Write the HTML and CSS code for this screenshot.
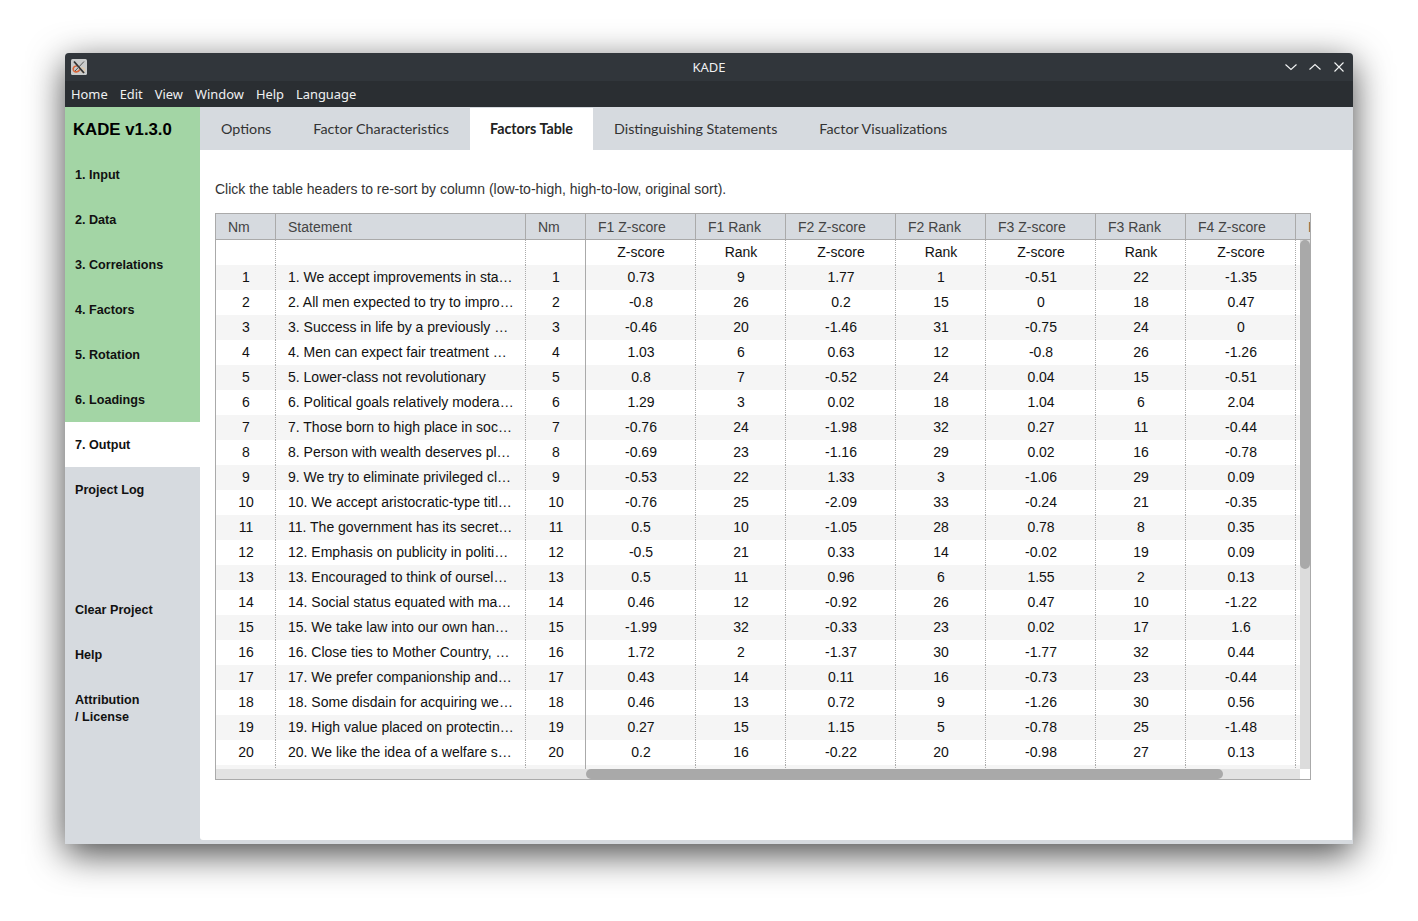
FILE: index.html
```html
<!DOCTYPE html>
<html>
<head>
    <title>KADE</title>
    <link rel="stylesheet" href="styles.css">
</head>
<body>
<div class="window">
    <div class="titlebar">
        <svg class="app-icon" width="16" height="16" viewBox="0 0 16 16">
            <rect x="0" y="0" width="16" height="16" rx="1.5" fill="#c9cbcb"/>
            <path d="M6 7 C3 6.5 1.5 9.5 2.5 11.5 C3.5 13.5 7 13.5 9 10.5" stroke="#d9663a" stroke-width="1.6" fill="none"/>
            <path d="M10 9 C12.5 8.5 14 10 13.5 11.5 C13 13 11.5 13.5 10.5 13" stroke="#e3c9a8" stroke-width="1.2" fill="none"/>
            <path d="M3 2.5 L13 14" stroke="#333" stroke-width="1.8" fill="none"/>
            <path d="M13 2.5 L4 12" stroke="#555" stroke-width="1" fill="none"/>
        </svg>
        <span class="title-text">KADE</span>
        <div class="win-buttons">
            <svg width="12" height="12" viewBox="0 0 12 12"><path d="M0.5 3.5 L6 8.5 L11.5 3.5" stroke="#f2f4f4" stroke-width="1.1" fill="none"/></svg>
            <svg width="12" height="12" viewBox="0 0 12 12"><path d="M0.5 8.5 L6 3.5 L11.5 8.5" stroke="#f2f4f4" stroke-width="1.1" fill="none"/></svg>
            <svg width="12" height="12" viewBox="0 0 12 12"><path d="M1.5 1.5 L10.5 10.5 M10.5 1.5 L1.5 10.5" stroke="#f2f4f4" stroke-width="1.1" fill="none"/></svg>
        </div>
    </div>
    <div class="menubar">
        <span>Home</span><span>Edit</span><span>View</span><span>Window</span><span>Help</span><span>Language</span>
    </div>
    <div class="main">
        <div class="sidebar">
            <div class="brand">KADE v1.3.0</div>
            <div class="nav-item green">1. Input</div>
            <div class="nav-item green">2. Data</div>
            <div class="nav-item green">3. Correlations</div>
            <div class="nav-item green">4. Factors</div>
            <div class="nav-item green">5. Rotation</div>
            <div class="nav-item green">6. Loadings</div>
            <div class="nav-item active">7. Output</div>
            <div class="nav-item">Project Log</div>
            <div class="nav-spacer"></div>
            <div class="nav-item">Clear Project</div>
            <div class="nav-item">Help</div>
            <div class="nav-item">Attribution<br>/ License</div>
        </div>
        <div class="content">
            <div class="tabs">
                <div class="tab">Options</div>
                <div class="tab">Factor Characteristics</div>
                <div class="tab selected">Factors Table</div>
                <div class="tab">Distinguishing Statements</div>
                <div class="tab">Factor Visualizations</div>
            </div>
            <div class="panel">
                <p class="hint">Click the table headers to re-sort by column (low-to-high, high-to-low, original sort).</p>
                <div class="grid">
                    <table>
                        <colgroup>
                            <col class="w60"><col class="w250"><col class="w60">
                            <col class="w110"><col class="w90"><col class="w110"><col class="w90">
                            <col class="w110"><col class="w90"><col class="w110"><col class="w90">
                        </colgroup>
                        <thead>
                            <tr><th>Nm</th><th>Statement</th><th class="frozen">Nm</th><th>F1 Z-score</th><th>F1 Rank</th><th>F2 Z-score</th><th>F2 Rank</th><th>F3 Z-score</th><th>F3 Rank</th><th>F4 Z-score</th><th>F4 Rank</th></tr>
                        </thead>
                        <tbody>
                            <tr><td></td><td></td><td class="frozen"></td><td>Z-score</td><td>Rank</td><td>Z-score</td><td>Rank</td><td>Z-score</td><td>Rank</td><td>Z-score</td><td></td></tr>
                            <tr><td>1</td><td class="stmt">1. We accept improvements in sta…</td><td class="frozen">1</td><td>0.73</td><td>9</td><td>1.77</td><td>1</td><td>-0.51</td><td>22</td><td>-1.35</td><td></td></tr>
                            <tr><td>2</td><td class="stmt">2. All men expected to try to impro…</td><td class="frozen">2</td><td>-0.8</td><td>26</td><td>0.2</td><td>15</td><td>0</td><td>18</td><td>0.47</td><td></td></tr>
                            <tr><td>3</td><td class="stmt">3. Success in life by a previously …</td><td class="frozen">3</td><td>-0.46</td><td>20</td><td>-1.46</td><td>31</td><td>-0.75</td><td>24</td><td>0</td><td></td></tr>
                            <tr><td>4</td><td class="stmt">4. Men can expect fair treatment …</td><td class="frozen">4</td><td>1.03</td><td>6</td><td>0.63</td><td>12</td><td>-0.8</td><td>26</td><td>-1.26</td><td></td></tr>
                            <tr><td>5</td><td class="stmt">5. Lower-class not revolutionary</td><td class="frozen">5</td><td>0.8</td><td>7</td><td>-0.52</td><td>24</td><td>0.04</td><td>15</td><td>-0.51</td><td></td></tr>
                            <tr><td>6</td><td class="stmt">6. Political goals relatively modera…</td><td class="frozen">6</td><td>1.29</td><td>3</td><td>0.02</td><td>18</td><td>1.04</td><td>6</td><td>2.04</td><td></td></tr>
                            <tr><td>7</td><td class="stmt">7. Those born to high place in soc…</td><td class="frozen">7</td><td>-0.76</td><td>24</td><td>-1.98</td><td>32</td><td>0.27</td><td>11</td><td>-0.44</td><td></td></tr>
                            <tr><td>8</td><td class="stmt">8. Person with wealth deserves pl…</td><td class="frozen">8</td><td>-0.69</td><td>23</td><td>-1.16</td><td>29</td><td>0.02</td><td>16</td><td>-0.78</td><td></td></tr>
                            <tr><td>9</td><td class="stmt">9. We try to eliminate privileged cl…</td><td class="frozen">9</td><td>-0.53</td><td>22</td><td>1.33</td><td>3</td><td>-1.06</td><td>29</td><td>0.09</td><td></td></tr>
                            <tr><td>10</td><td class="stmt">10. We accept aristocratic-type titl…</td><td class="frozen">10</td><td>-0.76</td><td>25</td><td>-2.09</td><td>33</td><td>-0.24</td><td>21</td><td>-0.35</td><td></td></tr>
                            <tr><td>11</td><td class="stmt">11. The government has its secret…</td><td class="frozen">11</td><td>0.5</td><td>10</td><td>-1.05</td><td>28</td><td>0.78</td><td>8</td><td>0.35</td><td></td></tr>
                            <tr><td>12</td><td class="stmt">12. Emphasis on publicity in politi…</td><td class="frozen">12</td><td>-0.5</td><td>21</td><td>0.33</td><td>14</td><td>-0.02</td><td>19</td><td>0.09</td><td></td></tr>
                            <tr><td>13</td><td class="stmt">13. Encouraged to think of oursel…</td><td class="frozen">13</td><td>0.5</td><td>11</td><td>0.96</td><td>6</td><td>1.55</td><td>2</td><td>0.13</td><td></td></tr>
                            <tr><td>14</td><td class="stmt">14. Social status equated with ma…</td><td class="frozen">14</td><td>0.46</td><td>12</td><td>-0.92</td><td>26</td><td>0.47</td><td>10</td><td>-1.22</td><td></td></tr>
                            <tr><td>15</td><td class="stmt">15. We take law into our own han…</td><td class="frozen">15</td><td>-1.99</td><td>32</td><td>-0.33</td><td>23</td><td>0.02</td><td>17</td><td>1.6</td><td></td></tr>
                            <tr><td>16</td><td class="stmt">16. Close ties to Mother Country, …</td><td class="frozen">16</td><td>1.72</td><td>2</td><td>-1.37</td><td>30</td><td>-1.77</td><td>32</td><td>0.44</td><td></td></tr>
                            <tr><td>17</td><td class="stmt">17. We prefer companionship and…</td><td class="frozen">17</td><td>0.43</td><td>14</td><td>0.11</td><td>16</td><td>-0.73</td><td>23</td><td>-0.44</td><td></td></tr>
                            <tr><td>18</td><td class="stmt">18. Some disdain for acquiring we…</td><td class="frozen">18</td><td>0.46</td><td>13</td><td>0.72</td><td>9</td><td>-1.26</td><td>30</td><td>0.56</td><td></td></tr>
                            <tr><td>19</td><td class="stmt">19. High value placed on protectin…</td><td class="frozen">19</td><td>0.27</td><td>15</td><td>1.15</td><td>5</td><td>-0.78</td><td>25</td><td>-1.48</td><td></td></tr>
                            <tr><td>20</td><td class="stmt">20. We like the idea of a welfare s…</td><td class="frozen">20</td><td>0.2</td><td>16</td><td>-0.22</td><td>20</td><td>-0.98</td><td>27</td><td>0.13</td><td></td></tr>
                            <tr><td></td><td></td><td class="frozen"></td><td></td><td></td><td></td><td></td><td></td><td></td><td></td><td></td></tr>
                        </tbody>
                    </table>
                    <div class="vscroll"><div class="vthumb"></div></div>
                    <div class="hscroll"><div class="hthumb"></div></div>
                    <div class="corner"></div>
                </div>
            </div>
        </div>
    </div>
</div>
</body>
</html>
```

FILE: styles.css
```css
html, body {
    margin: 0;
    background-color: white;
}
body {
    padding: 53px 65px 0;
    height: 921px;
    box-sizing: border-box;
    overflow: hidden;
}
.window {
    width: 1288px;
    height: 791px;
    display: flex;
    flex-direction: column;
    border-radius: 4px 4px 0 0;
    overflow: hidden;
    box-shadow: 0 10px 36px rgba(0, 0, 0, 0.72);
    background-color: #d6dadf;
}
.titlebar {
    position: relative;
    height: 28px;
    flex: none;
    display: flex;
    align-items: center;
    justify-content: center;
    background-color: #31363b;
}
.app-icon {
    position: absolute;
    left: 6px;
    top: 6px;
}
.title-text {
    font-family: "Noto Sans", sans-serif;
    font-size: 13px;
    color: #eff0f1;
}
.win-buttons {
    position: absolute;
    right: 8px;
    top: 8px;
    display: flex;
    gap: 12px;
}
.win-buttons svg {
    display: block;
}
.menubar {
    height: 26px;
    flex: none;
    display: flex;
    align-items: center;
    gap: 12px;
    padding-left: 6px;
    background-color: #2a2e32;
    color: #eff0f1;
    font-family: "Noto Sans", sans-serif;
    font-size: 12.9px;
}
.main {
    flex: 1;
    display: flex;
    min-height: 0;
}
.sidebar {
    width: 135px;
    flex: none;
    font-family: "Liberation Sans", Arial, sans-serif;
    font-weight: bold;
    color: #111;
}
.brand {
    height: 45px;
    box-sizing: border-box;
    padding: 13px 0 0 8px;
    font-size: 16.8px;
    color: #000;
    background-color: #a3d5a5;
}
.nav-item {
    height: 45px;
    box-sizing: border-box;
    padding: 15px 0 0 10px;
    font-size: 12.6px;
    line-height: 17px;
}
.nav-item.green {
    background-color: #a3d5a5;
}
.nav-item.active {
    background-color: white;
}
.nav-spacer {
    height: 75px;
}
.content {
    flex: 1;
    display: flex;
    flex-direction: column;
    padding-right: 1px;
    padding-bottom: 4px;
    min-width: 0;
}
.tabs {
    height: 43px;
    flex: none;
    display: flex;
    font-family: Lato, sans-serif;
    font-size: 14.3px;
    color: #333;
}
.tab {
    padding: 13px 21px 0;
    box-sizing: border-box;
}
.selected {
    margin-top: 1px;
    padding-top: 12px;
    padding-left: 20px;
    padding-right: 20px;
    font-weight: bold;
    color: #222;
    background-color: white;
}
.panel {
    flex: 1;
    background-color: white;
    padding: 31px 0 0 15px;
    border-bottom-left-radius: 3px;
    font-family: "Liberation Sans", Arial, sans-serif;
}
.hint {
    margin: 0 0 16px;
    font-size: 14px;
    line-height: 16px;
    color: #333;
}
.grid {
    position: relative;
    width: 1094px;
    height: 565px;
    border: 1px solid #aaa;
    overflow: hidden;
}
table {
    table-layout: fixed;
    width: 1080px;
    border-collapse: separate;
    border-spacing: 0;
    font-size: 14px;
}
.w60 { width: 60px; }
.w250 { width: 250px; }
.w90 { width: 90px; }
.w110 { width: 110px; }
th {
    height: 26px;
    padding: 0 12px;
    box-sizing: border-box;
    font-weight: normal;
    text-align: left;
    color: #444;
    background-color: #d6dadf;
    border-right: 1px solid #aaa;
    border-bottom: 1px solid #aaa;
    white-space: nowrap;
    overflow: hidden;
}
th:last-child {
    color: #864;
}
td {
    height: 25px;
    padding: 0 11.5px 2px 12.5px;
    box-sizing: border-box;
    text-align: center;
    color: #111;
    border-right: 1px dotted #aaa;
    white-space: nowrap;
}
td.stmt {
    padding-left: 12px;
    padding-right: 8px;
    text-align: left;
}
td.frozen {
    border-right: 1px solid #aaa;
}
tbody tr:nth-child(even) td {
    background-color: #f5f5f5;
}
.vscroll {
    position: absolute;
    right: 0;
    top: 26px;
    bottom: 10px;
    width: 10px;
    background-color: #dcdcdc;
}
.vthumb {
    height: 329px;
    border-radius: 5px;
    background-color: #a9a9a9;
}
.hscroll {
    position: absolute;
    left: 0;
    right: 10px;
    bottom: 0;
    height: 10px;
    padding-left: 370px;
    box-sizing: border-box;
    background-color: #e2e2e2;
}
.hthumb {
    width: 637px;
    height: 10px;
    border-radius: 5px;
    background-color: #a9a9a9;
}
.corner {
    position: absolute;
    right: 0;
    bottom: 0;
    width: 10px;
    height: 10px;
    background-color: white;
}
```
